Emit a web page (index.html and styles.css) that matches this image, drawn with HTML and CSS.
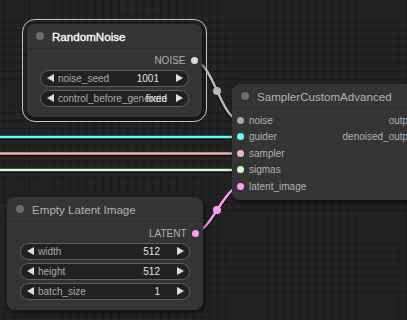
FILE: index.html
```html
<!DOCTYPE html>
<html lang="en">
  <head>
    <meta charset="UTF-8" />
    <meta name="viewport" content="width=device-width, initial-scale=1.0" />
    <title>Node Graph</title>
    <link rel="stylesheet" href="styles.css">
  </head>

  <body>
    <div class="canvas">
      <svg class="links" width="407" height="320" viewBox="0 0 407 320">
        <g class="link-shadow">
          <path d="M-5 137 H240" />
          <path d="M-5 153.5 H240" />
          <path d="M-5 170 H240" />
          <path d="M194 61 C213 61 221 120.5 240.5 120.5" />
          <path d="M194 233 C210.3 233 224 186.5 240.5 186.5" />
        </g>
        <path class="link" stroke="#66ffff" d="M-5 137 H240" />
        <path class="link" stroke="#ecb4b4" d="M-5 153.5 H240" />
        <path class="link" stroke="#cdffcd" d="M-5 170 H240" />
        <path class="link" stroke="#b8b8b8" d="M194 61 C213 61 221 120.5 240.5 120.5" />
        <path class="link" stroke="#ff9cf9" d="M194 233 C210.3 233 224 186.5 240.5 186.5" />
        <circle cx="217" cy="91" r="4" fill="#b8b8b8" />
        <circle cx="217" cy="210" r="4" fill="#ff9cf9" />
      </svg>

      <div class="node node-noise selected">
        <div class="node-title">
          <span class="title-dot"></span>
          <span class="title-text">RandomNoise</span>
        </div>
        <div class="node-body">
          <div class="slot slot-out">
            <span class="slot-label">NOISE</span>
            <span class="slot-dot dot-noise-out"></span>
          </div>
          <div class="widget">
            <span class="arrow arrow-left"></span>
            <span class="widget-text">
              <span class="widget-label">noise_seed</span>
              <span class="widget-value">1001</span>
            </span>
            <span class="arrow arrow-right"></span>
          </div>
          <div class="widget">
            <span class="arrow arrow-left"></span>
            <span class="widget-text">
              <span class="widget-label">control_before_generate</span>
              <span class="widget-value">fixed</span>
            </span>
            <span class="arrow arrow-right"></span>
          </div>
        </div>
      </div>

      <div class="node node-sampler">
        <div class="node-title">
          <span class="title-dot"></span>
          <span class="title-text">SamplerCustomAdvanced</span>
        </div>
        <div class="node-body sampler-body">
          <div class="slots-in">
            <div class="slot slot-in"><span class="slot-dot dot-noise"></span><span class="slot-label">noise</span></div>
            <div class="slot slot-in"><span class="slot-dot dot-guider"></span><span class="slot-label">guider</span></div>
            <div class="slot slot-in"><span class="slot-dot dot-sampler"></span><span class="slot-label">sampler</span></div>
            <div class="slot slot-in"><span class="slot-dot dot-sigmas"></span><span class="slot-label">sigmas</span></div>
            <div class="slot slot-in"><span class="slot-dot dot-latent"></span><span class="slot-label">latent_image</span></div>
          </div>
          <div class="slots-out">
            <div class="slot slot-out"><span class="slot-label">output</span><span class="slot-dot dot-latent"></span></div>
            <div class="slot slot-out"><span class="slot-label">denoised_output</span><span class="slot-dot dot-latent"></span></div>
          </div>
        </div>
      </div>

      <div class="node node-latent">
        <div class="node-title">
          <span class="title-dot"></span>
          <span class="title-text">Empty Latent Image</span>
        </div>
        <div class="node-body">
          <div class="slot slot-out">
            <span class="slot-label">LATENT</span>
            <span class="slot-dot dot-latent"></span>
          </div>
          <div class="widget">
            <span class="arrow arrow-left"></span>
            <span class="widget-text">
              <span class="widget-label">width</span>
              <span class="widget-value">512</span>
            </span>
            <span class="arrow arrow-right"></span>
          </div>
          <div class="widget">
            <span class="arrow arrow-left"></span>
            <span class="widget-text">
              <span class="widget-label">height</span>
              <span class="widget-value">512</span>
            </span>
            <span class="arrow arrow-right"></span>
          </div>
          <div class="widget">
            <span class="arrow arrow-left"></span>
            <span class="widget-text">
              <span class="widget-label">batch_size</span>
              <span class="widget-value">1</span>
            </span>
            <span class="arrow arrow-right"></span>
          </div>
        </div>
      </div>
    </div>
  </body>
</html>
```

FILE: styles.css
```css
body {
  margin: 0;
  padding: 0;
  font-family: "Liberation Sans", Arial, sans-serif;
  background-color: #232323;
  overflow: hidden;
}

.canvas {
  position: relative;
  width: 407px;
  height: 320px;
  overflow: hidden;
  background-color: #242424;
  background-image:
    linear-gradient(#1b1b1b 1px, transparent 1px),
    linear-gradient(90deg, #1b1b1b 1px, transparent 1px);
  background-size: 8.2px 8.2px;
  background-position: 4.5px 5.5px;
}

.links {
  position: absolute;
  left: 0;
  top: 0;
}
.link-shadow path {
  fill: none;
  stroke: rgba(0, 0, 0, 0.55);
  stroke-width: 4.5;
  transform: translateY(0.8px);
}
.link {
  fill: none;
  stroke-width: 2.5;
}

/* nodes */
.node {
  position: absolute;
  background-color: #353535;
  border-radius: 8px;
  box-shadow: 2px 3px 6px rgba(0, 0, 0, 0.55);
}
.node.selected {
  outline: 1.5px solid #c4c4c4;
  outline-offset: 4px;
}
.node-noise {
  left: 27px;
  top: 24px;
  width: 175px;
}
.node-sampler {
  left: 232px;
  top: 84px;
  width: 201px;
}
.node-latent {
  left: 7px;
  top: 197px;
  width: 196px;
}

.node-title {
  height: 24px;
  display: flex;
  align-items: center;
  border-bottom: 1px solid #2c2c2c;
}
.title-dot {
  width: 8px;
  height: 8px;
  margin: 0 8.5px 0 8.5px;
  border-radius: 50%;
  background-color: #6c6c6c;
}
.title-text {
  font-size: 11.6px;
  color: #b2b2b2;
  white-space: nowrap;
}
.selected .title-text {
  color: #fff;
  -webkit-text-stroke: 0.35px #fff;
}

.node-body {
  padding: 3px 0 10px;
}
.sampler-body {
  display: flex;
  justify-content: space-between;
  padding-bottom: 5px;
}

/* slots */
.slot {
  height: 16.5px;
  display: flex;
  align-items: center;
  gap: 5px;
  font-size: 10px;
  color: #b0b0b0;
  white-space: nowrap;
}
.slot-in {
  padding-left: 5px;
}
.slot-out {
  justify-content: flex-end;
  padding-right: 4.5px;
}
.node-noise .slot-out,
.node-latent .slot-out {
  height: 16px;
  margin-bottom: 2px;
}
.slot-dot {
  width: 7px;
  height: 7px;
  border-radius: 50%;
  flex: none;
}
.dot-noise-out {
  background-color: #dcdcdc;
}
.dot-noise {
  background-color: #a8a8a8;
}
.dot-guider {
  background-color: #66ffff;
}
.dot-sampler {
  background-color: #ecb4b4;
}
.dot-sigmas {
  background-color: #cdffcd;
}
.dot-latent {
  background-color: #ff9cf9;
}

/* widgets */
.widget {
  height: 16.5px;
  margin: 0 13px 3.5px;
  box-sizing: border-box;
  border: 1px solid #5e5e5e;
  border-radius: 9px;
  background-color: #222;
  display: flex;
  align-items: center;
  padding: 0 5px 0 6px;
  font-size: 10px;
}
.widget:last-child {
  margin-bottom: 0;
}
.widget-text {
  flex: 1;
  min-width: 0;
  display: grid;
  margin: 0 17px 0 4px;
  white-space: nowrap;
}
.widget-label,
.widget-value {
  grid-area: 1 / 1;
}
.widget-label {
  color: #aaa;
}
.widget-value {
  justify-self: end;
  color: #e2e2e2;
}
.arrow {
  width: 0;
  height: 0;
  border-top: 4px solid transparent;
  border-bottom: 4px solid transparent;
}
.arrow-left {
  border-right: 7px solid #dedede;
}
.arrow-right {
  border-left: 7px solid #dedede;
}
```
